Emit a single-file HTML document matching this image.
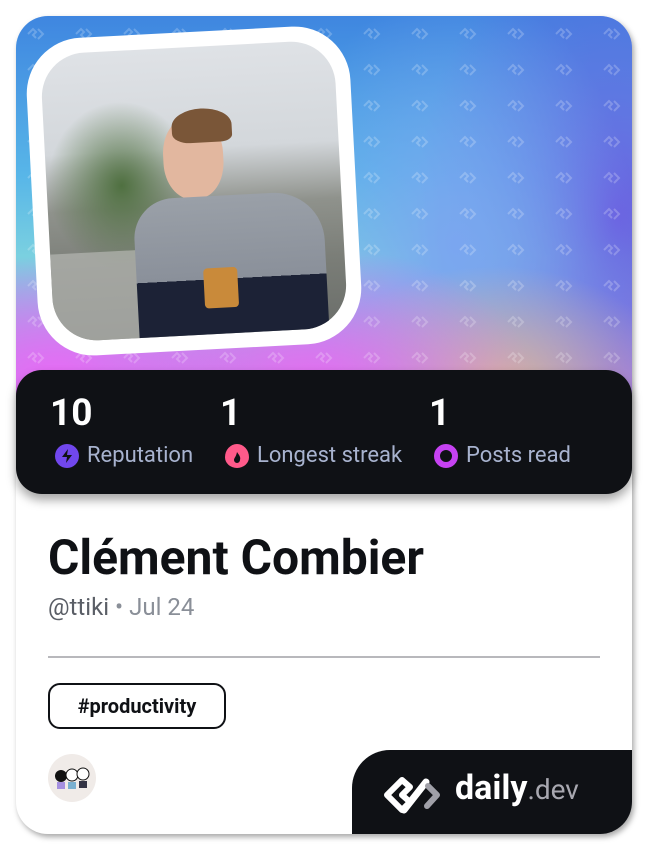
<!DOCTYPE html>
<html><head><meta charset="utf-8">
<style>
*{margin:0;padding:0;box-sizing:border-box}
body{width:648px;height:850px;background:#fff;font-family:Roboto,"Liberation Sans",sans-serif;position:relative;overflow:hidden}
.card{position:absolute;left:16px;top:16px;width:616px;height:818px;border-radius:32px;background:#fff;box-shadow:2px 3px 6px rgba(0,0,0,.35);overflow:hidden}
.hdr{position:absolute;left:0;top:0;width:616px;height:400px;
background:
radial-gradient(ellipse 200px 120px at 40px 360px,#e66cf5 0%,rgba(230,108,245,0) 100%),
radial-gradient(ellipse 220px 140px at 300px 370px,#e46ff0 0%,rgba(228,111,240,0) 100%),
radial-gradient(ellipse 180px 120px at 480px 370px,#d8b49a 0%,rgba(216,180,154,0) 100%),
radial-gradient(ellipse 180px 260px at 440px 230px,#7aa6f0 0%,rgba(122,166,240,0) 100%),
radial-gradient(ellipse 200px 300px at 600px 200px,#6a5ee0 0%,rgba(106,94,224,0) 100%),
linear-gradient(180deg,#3f86e0 0%,#58b6e8 40%,#7ad0e0 60%,#b88ae8 90%);}
.pat{position:absolute;left:0;top:0;width:616px;height:400px;opacity:.22}
.photo{position:absolute;left:16px;top:16px;width:324px;height:318px;border-radius:56px;background:#fff;transform:rotate(-3deg);padding:15px}
.img{width:100%;height:100%;border-radius:44px;overflow:hidden;position:relative;
background:linear-gradient(180deg,#dfe2e6 0%,#d3d7db 35%,#8f928c 55%,#7b7e78 75%,#6b6e6a 100%)}
.stats{position:absolute;left:16px;top:370px;width:616px;height:124px;border-radius:26px;background:#0f1115;box-shadow:0 6px 10px rgba(0,0,0,.35);color:#fff}
.num{position:absolute;top:22px;font-size:37px;font-weight:bold}
.lab{position:absolute;top:73px;font-size:22px;color:#a8b3cf;display:flex;align-items:center;gap:8px}
.ic{width:24px;height:24px;border-radius:50%;display:inline-block;position:relative}
h1{position:absolute;left:48px;top:529px;font-size:48px;font-weight:bold;color:#0f1115}
.sub{position:absolute;left:48px;top:593px;font-size:24px;color:#5a5e66}
.sub span{color:#8a8f98}
.hr{position:absolute;left:48px;top:656px;width:552px;height:2px;background:#b8b8bc}
.tag{position:absolute;left:48px;top:683px;width:178px;height:46px;border:2px solid #0f1115;border-radius:12px;font-size:20px;font-weight:bold;text-align:center;line-height:42px;color:#0f1115}
.av{position:absolute;left:48px;top:754px;width:48px;height:48px;border-radius:50%;background:#f0ebe8}
.logo{position:absolute;left:336px;top:734px;width:280px;height:84px;background:#0f1115;border-top-left-radius:38px}
</style></head><body>
<div class="card">
 <div class="hdr"></div>
 <svg class="pat" width="616" height="400"><defs><pattern id="p" width="48" height="36" patternUnits="userSpaceOnUse"><path d="M12 18l5-5 3 3-3 3 3 3M22 13l5 5-5 5" stroke="#fff" stroke-width="2" fill="none"/></pattern></defs><rect width="616" height="400" fill="url(#p)"/></svg>
 <div class="photo"><div class="img">
  <div style="position:absolute;left:0;top:50px;width:150px;height:170px;background:radial-gradient(ellipse at 50% 50%,#4f7040,rgba(79,112,64,0) 70%)"></div>
  <div style="position:absolute;left:0;top:200px;width:120px;height:90px;background:#b5b6b2;opacity:.7"></div>
  <div style="position:absolute;left:118px;top:70px;width:60px;height:82px;border-radius:45%;background:#e2b79f"></div>
  <div style="position:absolute;left:128px;top:62px;width:60px;height:34px;border-radius:50% 50% 20% 30%;background:#7a5638"></div>
  <div style="position:absolute;left:85px;top:150px;width:190px;height:160px;border-radius:40px 50px 0 0;background:linear-gradient(180deg,#9aa0a8 0%,#8a909a 52%,#1c2236 52%)"></div>
  <div style="position:absolute;left:152px;top:222px;width:34px;height:40px;border-radius:4px;background:#c98a3a"></div>
 </div></div>
 <div class="logo">
  <svg style="position:absolute;left:30px;top:24px" width="66" height="44"><path d="M20 6L5 21l15 15 8-8-8-7 8-8z" fill="none" stroke="#fff" stroke-width="6" stroke-linejoin="round"/><path d="M22 36L44 8" stroke="#fff" stroke-width="7" stroke-linecap="round"/><path d="M46 12l9 9-10 11" fill="none" stroke="#a0a0a8" stroke-width="6" stroke-linejoin="round" stroke-linecap="round"/></svg>
  <div style="position:absolute;left:103px;top:18px;font-size:34px;color:#fff;font-weight:bold">daily<span style="font-weight:normal;font-size:28px;color:#a8a8b0">.dev</span></div>
 </div>
</div>
<div class="stats">
 <div class="num" style="left:34px">10</div>
 <div class="num" style="left:204px">1</div>
 <div class="num" style="left:413px">1</div>
 <div class="lab" style="left:39px"><span class="ic" style="background:#7147ed"><svg width="24" height="24"><path d="M13 5l-6 8h5l-1 6 6-8h-5z" fill="#0f1115"/></svg></span>Reputation</div>
 <div class="lab" style="left:209px"><span class="ic" style="background:#ff5a8a;border-radius:50% 50% 50% 50%/55% 55% 45% 45%"><svg width="24" height="24"><path d="M12 8c2 3 4 5 3 8a3 3 0 01-6 0c0-2 2-3 3-8z" fill="#0f1115"/></svg></span>Longest streak</div>
 <div class="lab" style="left:418px"><span class="ic" style="border:6px solid #c642f2"></span>Posts read</div>
</div>
<h1>Clément Combier</h1>
<div class="sub">@ttiki <span>• Jul 24</span></div>
<div class="hr"></div>
<div class="tag">#productivity</div>
<div class="av"><svg width="48" height="48"><circle cx="13" cy="22" r="6" fill="#111"/><circle cx="24" cy="21" r="6" fill="#fff" stroke="#111"/><circle cx="35" cy="20" r="6" fill="#fff" stroke="#111"/><rect x="9" y="28" width="8" height="7" fill="#a590e0"/><rect x="20" y="28" width="8" height="7" fill="#7ab0d0"/><rect x="31" y="27" width="8" height="7" fill="#334"/></svg></div>
</body></html>
